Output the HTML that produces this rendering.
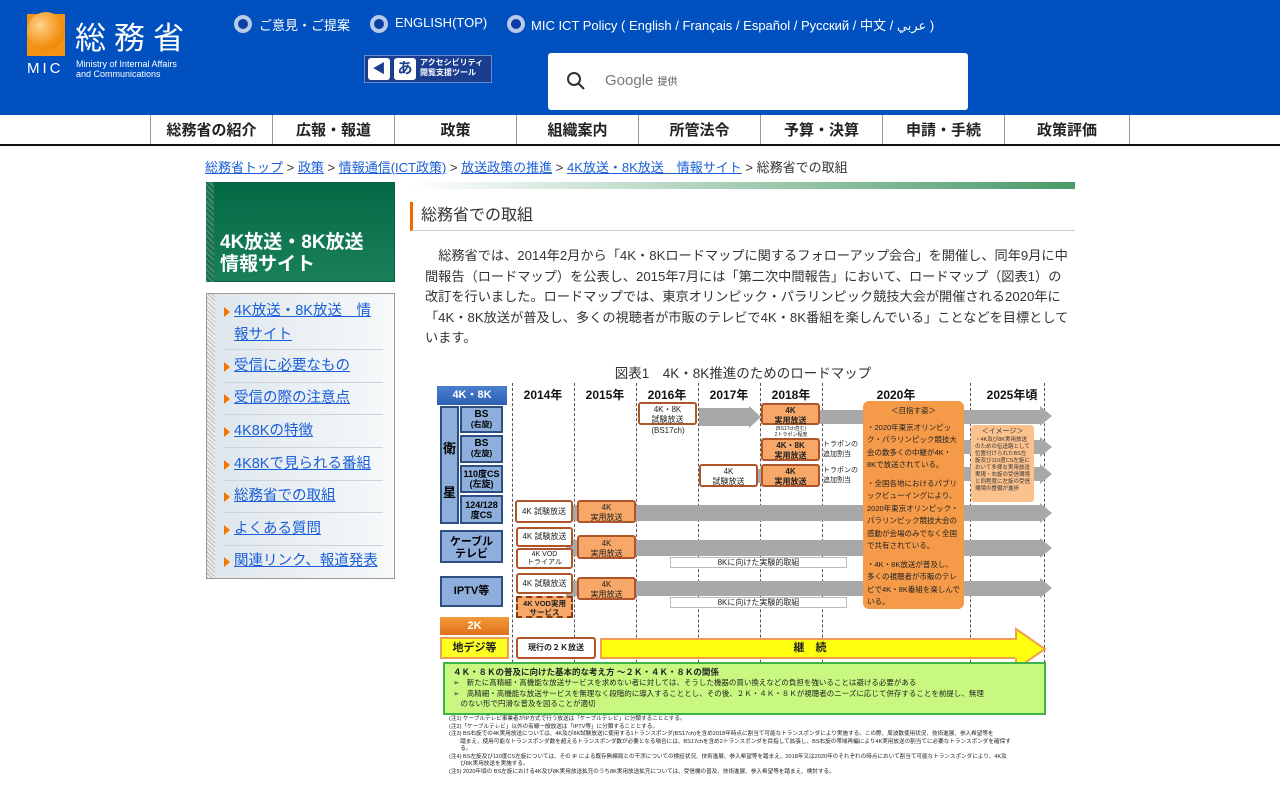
<!DOCTYPE html>
<html><head><meta charset="utf-8">
<style>
*{margin:0;padding:0;box-sizing:border-box}
body{width:1280px;height:800px;overflow:hidden;background:#fff;font-family:"Liberation Sans","Noto Sans CJK JP",sans-serif;position:relative;color:#333}
.a{position:absolute}
.hd{left:0;top:0;width:1280px;height:115px;background:#0050bf}
.rad{width:18px;height:18px;border-radius:50%;background:#0a3fa6;border:4px solid #b9c9e8}
.rt{color:#fff;font-size:13px}
.nav{top:115px;left:0;width:1280px;height:31px;border-bottom:2px solid #111;background:#fff}
.nv{top:115px;height:29px;width:122px;border-left:1px solid #999;text-align:center;font-size:15px;font-weight:bold;line-height:31px;color:#222}
a,.lk{color:#1a5fd8;text-decoration:underline}
.side li{list-style:none;position:absolute;left:27px;width:150px;font-size:14.5px;line-height:24px}
.side li:before{content:"";position:absolute;left:-10px;top:8px;border-left:6px solid #f07800;border-top:5px solid transparent;border-bottom:5px solid transparent}
.sep{left:16px;width:160px;height:1px;background:#d0d4d8}
.d{font-size:8px;text-align:center;line-height:10px;color:#222;font-weight:bold}
.w{background:#fff;border:2px solid #b0552a;border-radius:3px}
.o{background:#f7a868;border:2px solid #b0552a;border-radius:3px}
.bl{background:#8eaedb;border:2px solid #2e4f82;font-weight:bold;font-size:10px;color:#000}
.g{background:#a8a8a8}
.vl{top:383px;height:330px;border-left:1px dashed #555}
.yr{top:386px;font-size:12px;font-weight:bold;color:#111;width:60px;text-align:center}
.ar{width:0;height:0;border-left:12px solid #a8a8a8;border-top:10px solid transparent;border-bottom:10px solid transparent}
</style></head><body>
<div class="a hd"></div>
<div class="a" style="left:27px;top:14px;width:38px;height:42px;background:#f39214"></div>
<div class="a" style="left:27px;top:12px;width:38px;height:38px;border-radius:50%;background:radial-gradient(circle at 35% 35%,#ffd28a,#f39214 60%,#e07b00)"></div>
<div class="a" style="left:75px;top:16px;color:#fff;font-size:31px;letter-spacing:8px;font-family:'Noto Sans CJK JP',sans-serif;line-height:40px">総務省</div>
<div class="a" style="left:27px;top:60px;color:#fff;font-size:15px;letter-spacing:3px">MIC</div>
<div class="a" style="left:76px;top:59px;color:#fff;font-size:9px;line-height:10px">Ministry of Internal Affairs<br>and Communications</div>
<div class="a rad" style="left:234px;top:15px"></div><div class="a rt" style="left:259px;top:15px">ご意見・ご提案</div>
<div class="a rad" style="left:370px;top:15px"></div><div class="a rt" style="left:395px;top:15px">ENGLISH(TOP)</div>
<div class="a rad" style="left:507px;top:15px"></div><div class="a rt" style="left:531px;top:15px">MIC ICT Policy ( English / Français / Español / Русский / 中文 / عربي )</div>
<div class="a" style="left:364px;top:55px;width:128px;height:28px;background:#1a3d8f;border:1px solid #6b88c8"></div>
<div class="a" style="left:368px;top:58px;width:22px;height:22px;background:#fff;border-radius:3px;font-size:13px;text-align:center;line-height:22px;color:#1a3d8f">◀</div>
<div class="a" style="left:394px;top:58px;width:22px;height:22px;background:#fff;border-radius:3px;font-size:15px;text-align:center;line-height:22px;color:#1a3d8f;font-weight:bold">あ</div>
<div class="a" style="left:420px;top:58px;color:#fff;font-size:8px;line-height:10px;font-weight:bold">アクセシビリティ<br>閲覧支援ツール</div>
<div class="a" style="left:548px;top:53px;width:420px;height:57px;background:#fff;border-radius:3px"></div>
<svg class="a" style="left:566px;top:71px" width="20" height="20" viewBox="0 0 20 20"><circle cx="8" cy="8" r="6" fill="none" stroke="#333" stroke-width="2"/><path d="M12.5 12.5L18 18" stroke="#333" stroke-width="2.2"/></svg>
<div class="a" style="left:605px;top:72px;color:#777;font-size:15px">Google <span style="font-size:10px;color:#555">提供</span></div>
<div class="a nav"></div>
<div class="a nv" style="left:150px">総務省の紹介</div>
<div class="a nv" style="left:272px">広報・報道</div>
<div class="a nv" style="left:394px">政策</div>
<div class="a nv" style="left:516px">組織案内</div>
<div class="a nv" style="left:638px">所管法令</div>
<div class="a nv" style="left:760px">予算・決算</div>
<div class="a nv" style="left:882px">申請・手続</div>
<div class="a nv" style="left:1004px;width:126px;border-right:1px solid #999">政策評価</div>
<div class="a" style="left:205px;top:157px;font-size:13px;color:#333"><a>総務省トップ</a> &gt; <a>政策</a> &gt; <a>情報通信(ICT政策)</a> &gt; <a>放送政策の推進</a> &gt; <a>4K放送・8K放送　情報サイト</a> &gt; 総務省での取組</div>
<div class="a" style="left:206px;top:182px;width:189px;height:100px;background:linear-gradient(#046a45,#19805a);border:1px solid #0b5a3a"></div>
<div class="a" style="left:206px;top:182px;width:8px;height:100px;background:repeating-linear-gradient(45deg,#3c8c6a 0 2px,#1a6c4c 2px 4px)"></div>
<div class="a" style="left:220px;top:232px;color:#fff;font-size:19px;font-weight:bold;line-height:22px">4K放送・8K放送<br>情報サイト</div>
<div class="a side" style="left:206px;top:293px;width:189px;height:286px;border:1px solid #999;background:linear-gradient(90deg,#dde6ec,#f7f9fa)">
<div class="a" style="left:0;top:0;width:8px;height:284px;background:repeating-linear-gradient(45deg,#bbb 0 1px,#eee 1px 3px)"></div>
<ul>
<li style="top:5px"><span class="lk">4K放送・8K放送　情報サイト</span></li>
<div class="a sep" style="top:55px"></div>
<li style="top:60px"><span class="lk">受信に必要なもの</span></li>
<div class="a sep" style="top:88px"></div>
<li style="top:92px"><span class="lk">受信の際の注意点</span></li>
<div class="a sep" style="top:120px"></div>
<li style="top:125px"><span class="lk">4K8Kの特徴</span></li>
<div class="a sep" style="top:153px"></div>
<li style="top:158px"><span class="lk">4K8Kで見られる番組</span></li>
<div class="a sep" style="top:186px"></div>
<li style="top:190px"><span class="lk">総務省での取組</span></li>
<div class="a sep" style="top:218px"></div>
<li style="top:223px"><span class="lk">よくある質問</span></li>
<div class="a sep" style="top:251px"></div>
<li style="top:255px"><span class="lk">関連リンク、報道発表</span></li>
</ul></div>
<div class="a" style="left:410px;top:182px;width:665px;height:7px;background:linear-gradient(90deg,#fff,#4a9a6a)"></div>
<div class="a" style="left:410px;top:202px;width:665px;height:29px;border-left:3px solid #f06a00;border-bottom:1px solid #ccc;font-size:16px;padding-left:8px;line-height:28px;color:#333">総務省での取組</div>
<div class="a" style="left:425px;top:246px;width:645px;font-size:13.2px;line-height:20.5px;text-indent:1em;color:#333">総務省では、2014年2月から「4K・8Kロードマップに関するフォローアップ会合」を開催し、同年9月に中間報告（ロードマップ）を公表し、2015年7月には「第二次中間報告」において、ロードマップ（図表1）の改訂を行いました。ロードマップでは、東京オリンピック・パラリンピック競技大会が開催される2020年に「4K・8K放送が普及し、多くの視聴者が市販のテレビで4K・8K番組を楽しんでいる」ことなどを目標としています。</div>
<div class="a" style="left:600px;top:362px;width:286px;text-align:center;font-size:13.5px">図表1　4K・8K推進のためのロードマップ</div>
<div class="a vl" style="left:512px"></div><div class="a vl" style="left:574px"></div><div class="a vl" style="left:636px"></div><div class="a vl" style="left:698px"></div><div class="a vl" style="left:760px"></div><div class="a vl" style="left:822px"></div><div class="a vl" style="left:970px"></div><div class="a vl" style="left:1044px"></div>
<div class="a yr" style="left:513px">2014年</div><div class="a yr" style="left:575px">2015年</div><div class="a yr" style="left:637px">2016年</div><div class="a yr" style="left:699px">2017年</div><div class="a yr" style="left:761px">2018年</div><div class="a yr" style="left:866px">2020年</div><div class="a yr" style="left:977px;width:70px">2025年頃</div>
<div class="a d" style="left:437px;top:386px;width:70px;height:19px;background:linear-gradient(#4b7fd0,#2c5fb0);color:#fff;font-size:11px;line-height:19px">4K・8K</div>
<div class="a d bl" style="left:440px;top:406px;width:19px;height:118px;font-size:13px;line-height:22px;padding-top:30px">衛<br><br>星</div>
<div class="a d bl" style="left:460px;top:406px;width:43px;height:27px;padding-top:2px">BS<br><span style="font-size:8px">(右旋)</span></div>
<div class="a d bl" style="left:460px;top:435px;width:43px;height:28px;padding-top:2px">BS<br><span style="font-size:8px">(左旋)</span></div>
<div class="a d bl" style="left:460px;top:465px;width:43px;height:28px;padding-top:2px;font-size:9px">110度CS<br>(左旋)</div>
<div class="a d bl" style="left:460px;top:495px;width:43px;height:29px;padding-top:3px;font-size:9px">124/128<br>度CS</div>
<div class="a d bl" style="left:440px;top:530px;width:63px;height:33px;padding-top:4px;font-size:11px;line-height:12px">ケーブル<br>テレビ</div>
<div class="a d bl" style="left:440px;top:576px;width:63px;height:31px;line-height:27px;font-size:11px">IPTV等</div>
<div class="a d" style="left:440px;top:617px;width:69px;height:18px;background:linear-gradient(#f39a3a,#e0701a);color:#fff;font-size:11px;line-height:18px">2K</div>
<div class="a d" style="left:440px;top:637px;width:69px;height:22px;background:#ffff20;border:2px solid #f0a050;font-size:11px;line-height:18px">地デジ等</div>
<div class="a g" style="left:699px;top:408px;width:50px;height:18px"></div><div class="a ar" style="left:749px;top:406px;border-top-width:11px;border-bottom-width:11px"></div>
<div class="a g" style="left:820px;top:410px;width:220px;height:14px"></div><div class="a ar" style="left:1040px;top:406px"></div>
<div class="a g" style="left:960px;top:440px;width:80px;height:14px"></div><div class="a ar" style="left:1040px;top:437px"></div>
<div class="a g" style="left:960px;top:467px;width:80px;height:14px"></div><div class="a ar" style="left:1040px;top:464px"></div>
<div class="a g" style="left:636px;top:505px;width:404px;height:16px"></div><div class="a ar" style="left:1040px;top:503px"></div>
<div class="a g" style="left:636px;top:540px;width:404px;height:16px"></div><div class="a ar" style="left:1040px;top:538px"></div>
<div class="a g" style="left:636px;top:581px;width:404px;height:15px"></div><div class="a ar" style="left:1040px;top:578px"></div>
<div class="a g" style="left:566px;top:505px;width:12px;height:16px"></div>
<div class="a g" style="left:566px;top:540px;width:12px;height:16px"></div>
<div class="a g" style="left:566px;top:581px;width:12px;height:15px"></div>
<div class="a g" style="left:752px;top:469px;width:10px;height:14px"></div>
<div class="a d w" style="left:638px;top:402px;width:59px;height:23px;font-weight:normal;padding-top:1px">4K・8K<br>試験放送</div>
<div class="a d" style="left:640px;top:426px;width:56px;font-weight:normal">(BS17ch)</div>
<div class="a d o" style="left:761px;top:403px;width:59px;height:22px;padding-top:1px">4K<br>実用放送</div>
<div class="a d" style="left:761px;top:426px;width:60px;font-size:5px;line-height:6px;font-weight:normal">(BS17ch含む)<br>2トラポン程度</div>
<div class="a d o" style="left:761px;top:438px;width:59px;height:23px;padding-top:1px">4K・8K<br>実用放送</div>
<div class="a d" style="left:823px;top:440px;width:40px;font-size:7px;font-weight:normal;text-align:left">トラポンの<br>追加割当</div>
<div class="a d w" style="left:699px;top:464px;width:59px;height:23px;font-weight:normal;padding-top:1px">4K<br>試験放送</div>
<div class="a d o" style="left:761px;top:464px;width:59px;height:23px;padding-top:1px">4K<br>実用放送</div>
<div class="a d" style="left:823px;top:466px;width:40px;font-size:7px;font-weight:normal;text-align:left">トラポンの<br>追加割当</div>
<div class="a" style="left:863px;top:401px;width:101px;height:208px;background:#f59a48;border-radius:6px;font-size:7.5px;line-height:12.5px;color:#222;padding:4px 4px"><div style="text-align:center">＜目指す姿＞</div><div style="margin-top:4px">・2020年東京オリンピック・パラリンピック競技大会の数多くの中継が4K・8Kで放送されている。</div><div style="margin-top:6px">・全国各地におけるパブリックビューイングにより、2020年東京オリンピック・パラリンピック競技大会の感動が会場のみでなく全国で共有されている。</div><div style="margin-top:6px">・4K・8K放送が普及し、多くの視聴者が市販のテレビで4K・8K番組を楽しんでいる。</div></div>
<div class="a" style="left:971px;top:425px;width:63px;height:77px;background:#fbc28e;border-radius:3px;font-size:5.5px;line-height:7px;padding:2px 4px;color:#333"><div style="text-align:center;font-size:7px;line-height:10px">＜イメージ＞</div>・4K及び8K実用放送のための伝送路として位置付けられたBS左旋及び110度CS左旋において多様な実用放送実現・右旋の受信環境と同程度に左旋の受信環境の整備が進捗</div>
<div class="a d w" style="left:515px;top:500px;width:58px;height:23px;line-height:19px;font-weight:normal">4K 試験放送</div>
<div class="a d o" style="left:577px;top:500px;width:59px;height:23px;padding-top:1px;font-weight:normal">4K<br>実用放送</div>
<div class="a d w" style="left:516px;top:527px;width:57px;height:20px;line-height:16px;font-weight:normal">4K 試験放送</div>
<div class="a d w" style="left:516px;top:548px;width:57px;height:21px;font-weight:normal;font-size:7px;line-height:8px;padding-top:1px">4K VOD<br>トライアル</div>
<div class="a d o" style="left:577px;top:535px;width:59px;height:24px;padding-top:2px;font-weight:normal">4K<br>実用放送</div>
<div class="a d" style="left:670px;top:557px;width:177px;height:11px;border:1px solid #bbb;font-weight:normal;line-height:9px;background:#fff">8Kに向けた実験的取組</div>
<div class="a d w" style="left:516px;top:573px;width:57px;height:21px;line-height:17px;font-weight:normal">4K 試験放送</div>
<div class="a d" style="left:516px;top:596px;width:57px;height:22px;background:#f7a868;border:2px dashed #8a3a10;font-size:7.5px;line-height:9px;padding-top:1px">4K VOD実用<br>サービス</div>
<div class="a d o" style="left:577px;top:577px;width:59px;height:23px;padding-top:1px;font-weight:normal">4K<br>実用放送</div>
<div class="a d" style="left:670px;top:597px;width:177px;height:11px;border:1px solid #bbb;font-weight:normal;line-height:9px;background:#fff">8Kに向けた実験的取組</div>
<div class="a d w" style="left:516px;top:637px;width:80px;height:22px;line-height:18px">現行の２Ｋ放送</div>
<div class="a" style="left:600px;top:638px;width:418px;height:21px;background:#ffff10;border:2px solid #f0a050;border-right:none;text-align:center;font-size:11px;font-weight:bold;line-height:17px;color:#222">継　続</div>
<svg class="a" style="left:1015px;top:627px" width="32" height="44"><path d="M1 2L30 22L1 42Z" fill="#ffff10" stroke="#f0a050" stroke-width="2"/><rect x="0" y="13" width="3" height="18" fill="#ffff10"/></svg>
<div class="a" style="left:443px;top:662px;width:603px;height:53px;background:#c8f880;border:2px solid #3cb44a;font-size:7.5px;line-height:10.5px;color:#222;padding:2px 8px"><div style="font-weight:bold;font-size:8.5px;line-height:12px">４Ｋ・８Ｋの普及に向けた基本的な考え方 ～２Ｋ・４Ｋ・８Ｋの関係</div><div>➢　新たに高精細・高機能な放送サービスを求めない者に対しては、そうした機器の買い換えなどの負担を強いることは避ける必要がある</div><div>➢　高精細・高機能な放送サービスを無理なく段階的に導入することとし、その後、２Ｋ・４Ｋ・８Ｋが視聴者のニーズに応じて併存することを前提し、無理<br>　のない形で円滑な普及を図ることが適切</div></div>
<div class="a" style="left:449px;top:716px;width:598px;font-size:5.6px;line-height:7.5px;color:#222">(注1) ケーブルテレビ事業者がIP方式で行う放送は「ケーブルテレビ」に分類することとする。<br>(注2)「ケーブルテレビ」以外の有線一般放送は「IPTV等」に分類することとする。<br>(注3) BS右旋での4K実用放送については、4K及び8K試験放送に使用する1トランスポンダ(BS17ch)を含め2018年時点に割当て可能なトランスポンダにより実施する。この際、周波数使用状況、技術進展、参入希望等を<br>　　踏まえ、使用可能なトランスポンダ数を超えるトランスポンダ数が必要となる場合には、BS17chを含め2トランスポンダを目指して拡張し、BS右旋の帯域再編により4K実用放送の割当てに必要なトランスポンダを確保す<br>　　る。<br>(注4) BS左旋及び110度CS左旋については、その IF による既存無線局との干渉についての検証状況、技術進展、参入希望等を踏まえ、2018年又は2020年のそれぞれの時点において割当て可能なトランスポンダにより、4K及<br>　　び8K実用放送を実施する。<br>(注5) 2020年頃の BS左旋における4K及び8K実用放送拡充のうち8K実用放送拡充については、受信機の普及、技術進展、参入希望等を踏まえ、検討する。</div>
</body></html>
